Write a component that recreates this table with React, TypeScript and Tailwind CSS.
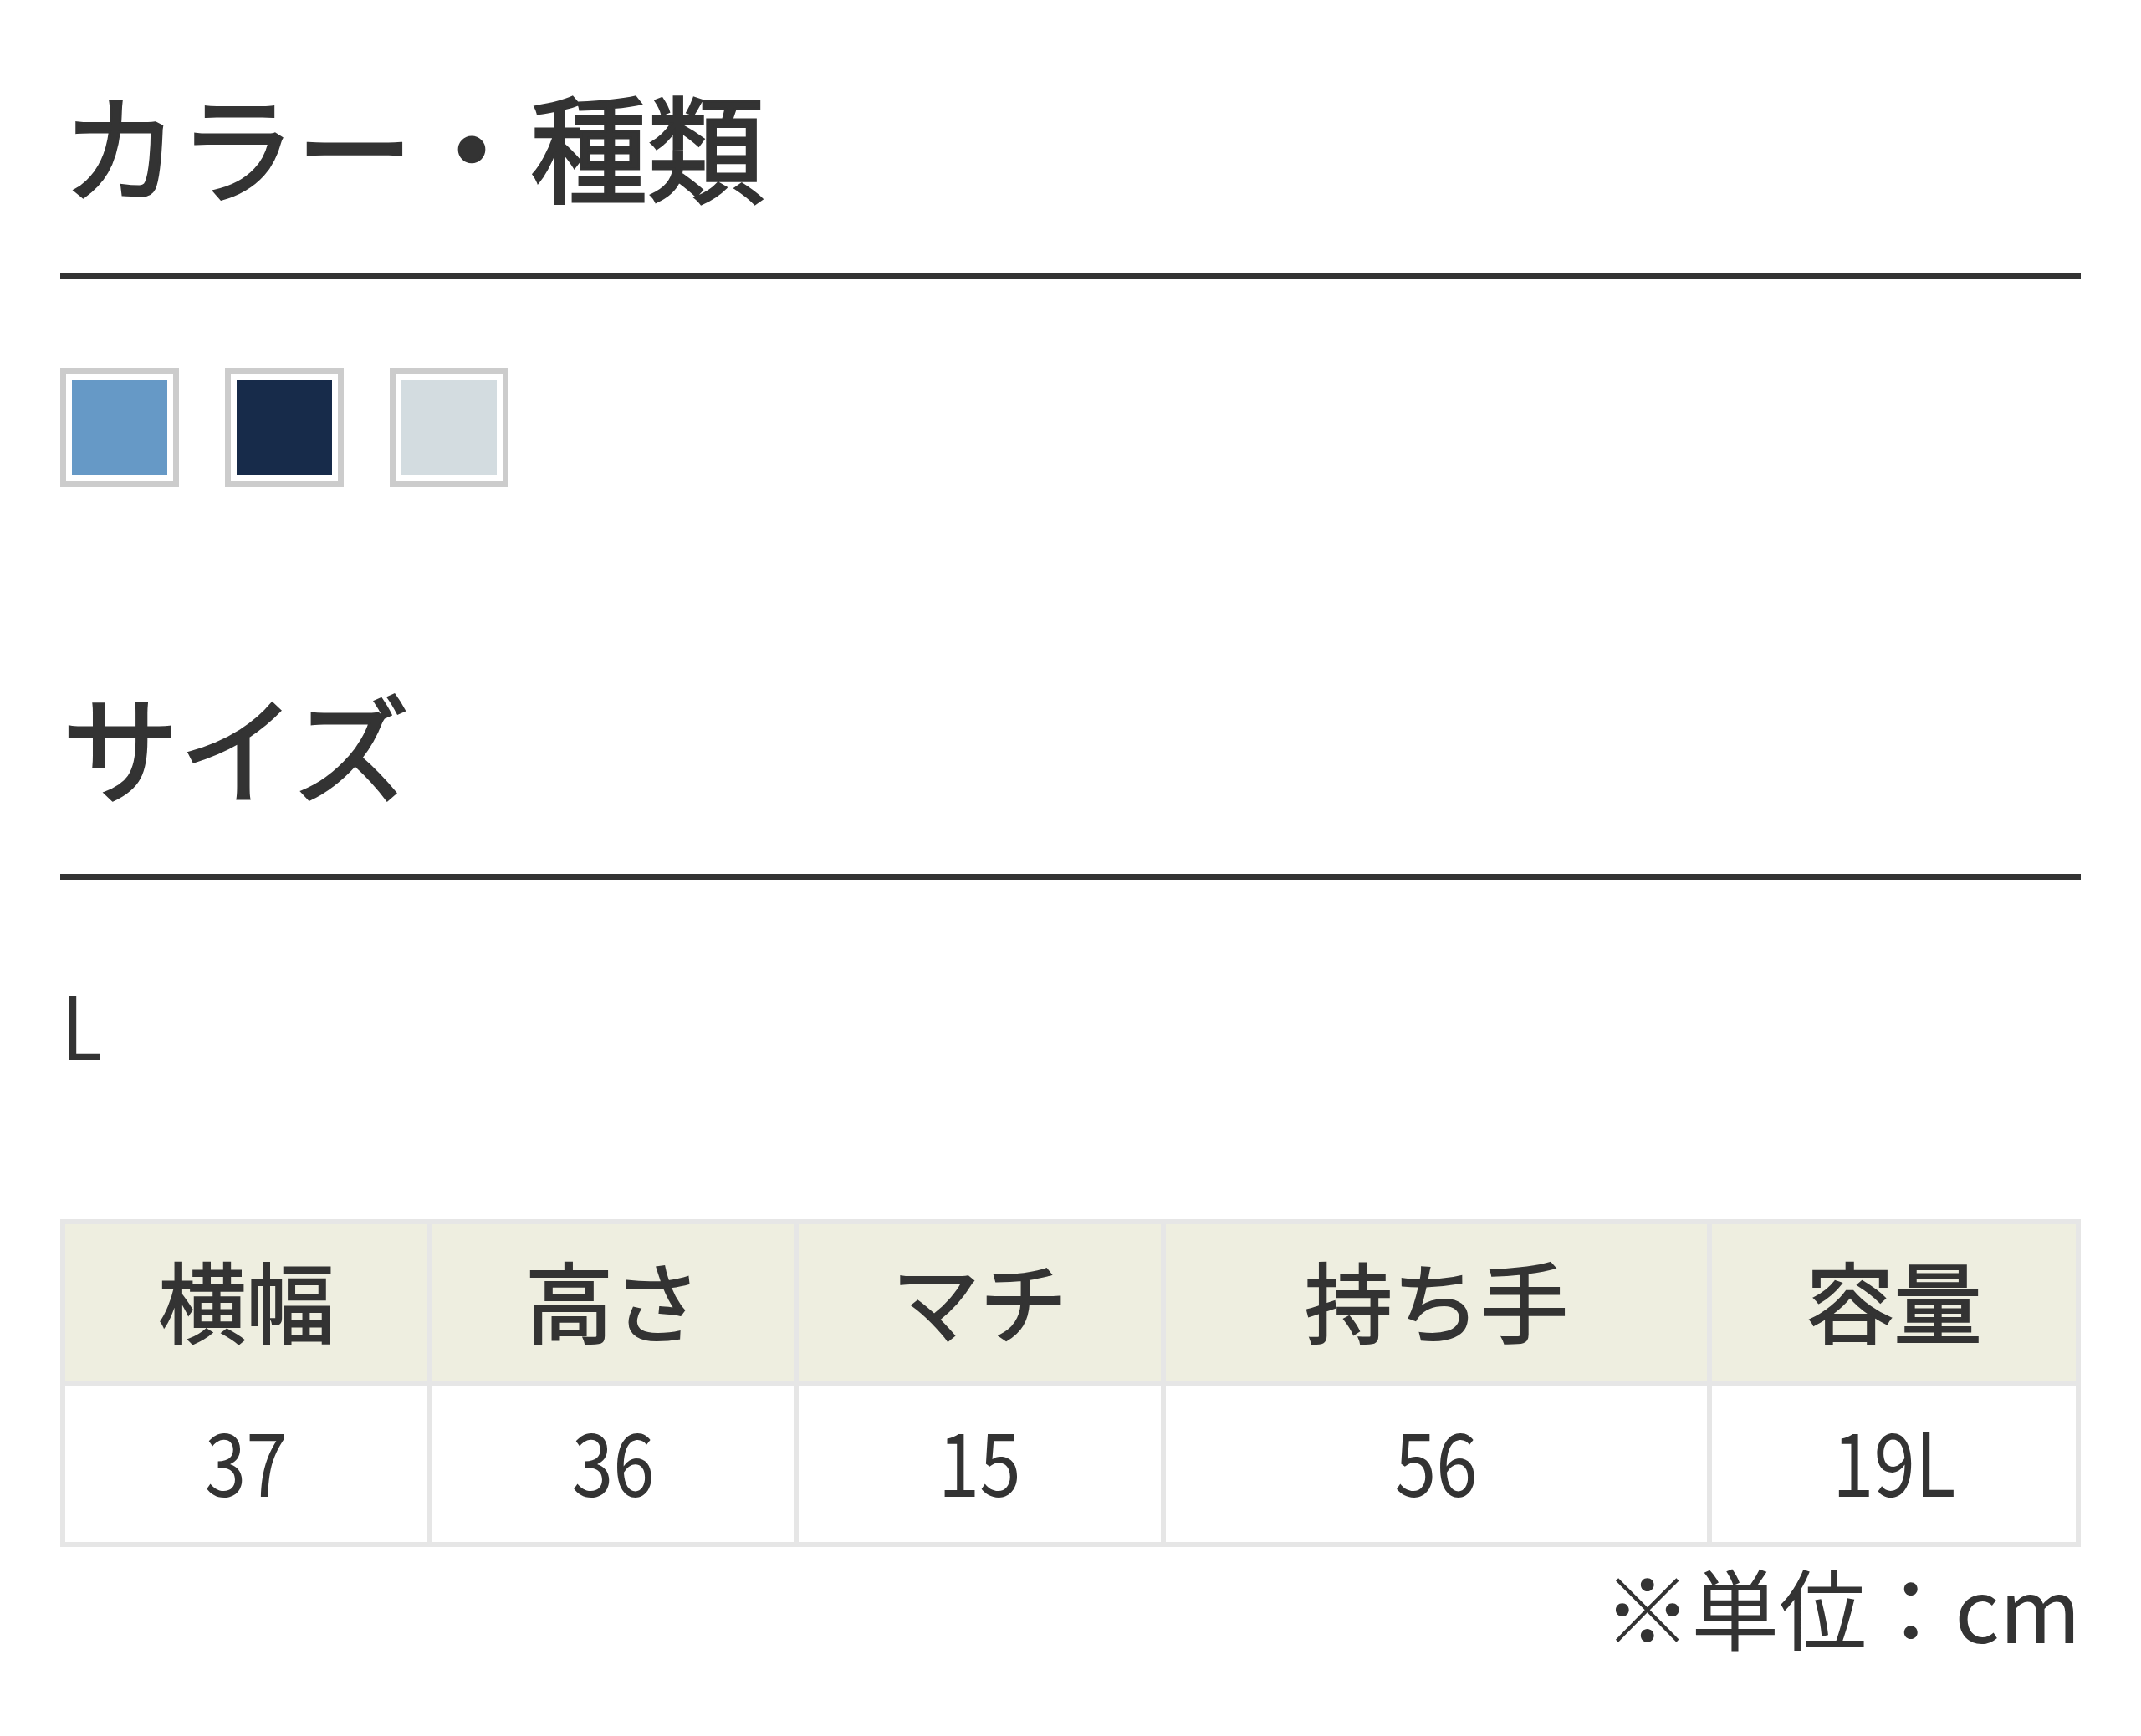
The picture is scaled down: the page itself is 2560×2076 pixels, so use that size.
import React from "react";

const font = { fontFamily: '"Noto Sans CJK JP", "Noto Sans", sans-serif' };

export default function App() {
  const headers = ["横幅", "高さ", "マチ", "持ち手", "容量"];
  const values = ["37", "36", "15", "56", "19L"];
  const swatches = ["#6699c6", "#172b4a", "#d3dce0"];
  return (
    <div className="w-[2560px] min-h-[2076px] bg-white px-[72px] pt-[66px] text-[#333333]" style={font}>
      <h2 className="text-[140px] leading-[210px] font-normal [-webkit-text-stroke:3px_#333333] pl-[2px] pb-[51px] border-b-[7px] border-[#333333]">
        カラー・種類
      </h2>
      <div className="mt-[106px] flex gap-[55px]">
        {swatches.map((c) => (
          <div key={c} className="w-[142px] h-[142px] border-[7px] border-[#cccccc] bg-white p-[7px]">
            <div className="w-full h-full" style={{ backgroundColor: c }} />
          </div>
        ))}
      </div>
      <h2 className="mt-[202px] text-[140px] leading-[210px] font-normal [-webkit-text-stroke:3px_#333333] pl-[2px] pb-[51px] border-b-[7px] border-[#333333]">
        サイズ
      </h2>
      <div className="mt-[92px] text-[105px] leading-[157px] pl-[2px]">
        <span className="inline-block origin-left scale-x-[0.85]">L</span>
      </div>
      <div className="mt-[157px] bg-[#e6e6e6] p-[6px] grid grid-cols-[433px_432px_433px_647px_435px] gap-[6px]">
        {headers.map((h) => (
          <div key={h} className="h-[187px] pb-[10px] bg-[#eeeee0] flex items-center justify-center text-[105px] font-normal [-webkit-text-stroke:2px_#333333] leading-none">
            {h}
          </div>
        ))}
        {values.map((v, i) => (
          <div key={i} className="h-[187px] pb-[12px] bg-white flex items-center justify-center text-[105px] leading-none">
            <span className="inline-block scale-x-[0.85]">{v}</span>
          </div>
        ))}
      </div>
      <div className="mt-[1px] text-right text-[105px] leading-[1.3]">※単位：cm</div>
    </div>
  );
}
